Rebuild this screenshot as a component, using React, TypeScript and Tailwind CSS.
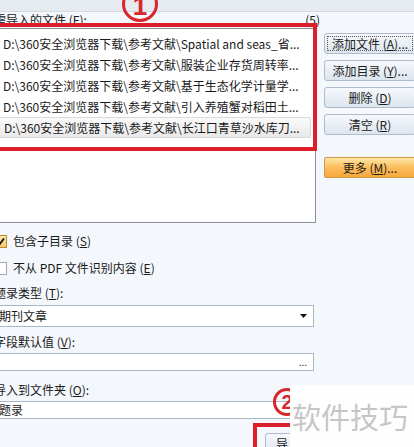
import React from "react";

const font = { fontFamily: '"Noto Sans CJK SC", "Noto Sans", sans-serif' };

function Btn({ children, focus }: { children: React.ReactNode; focus?: boolean }) {
  return (
    <div className="relative h-[21px] w-[92px] rounded-[3px] border border-[#aebccb] bg-gradient-to-b from-[#f6f9fc] to-[#dde5ee] flex items-center justify-center text-[12px] text-[#1a1a1a]">
      {focus && <div className="absolute inset-[2px] border border-dotted border-[#555]" />}
      <span className="relative">{children}</span>
    </div>
  );
}

const rows = [
  "D:\\360安全浏览器下载\\参考文献\\Spatial and seas_省...",
  "D:\\360安全浏览器下载\\参考文献\\服装企业存货周转率...",
  "D:\\360安全浏览器下载\\参考文献\\基于生态化学计量学...",
  "D:\\360安全浏览器下载\\参考文献\\引入养殖蟹对稻田土...",
  "D:\\360安全浏览器下载\\参考文献\\长江口青草沙水库刀...",
];

export default function App() {
  return (
    <div className="relative w-[414px] h-[447px] overflow-hidden bg-[#f4f7fb] text-[12px] text-[#1a1a1a] leading-none" style={font}>
      <div className="h-[12px] bg-[#e6ebf0] border-b border-[#d3dae2]" />
      <div className="flex">
        {/* left column */}
        <div className="ml-[-6px] w-[322px] flex flex-col">
          <div className="h-[16px] flex items-center justify-between">
            <span>需导入的文件 (<u>F</u>):</span>
            <span className="mr-[-4px]">(5)</span>
          </div>
          <div className="h-[195px] bg-white border border-[#8a9099] pt-[4px] pr-[4px]">
            {rows.map((r, i) => (
              <div
                key={i}
                className={
                  "h-[21px] flex items-center pl-[8px] whitespace-nowrap overflow-hidden " +
                  (i === 4 ? "rounded-[2px] border border-[#dadada] bg-gradient-to-b from-[#fafafa] to-[#e9e9e9]" : "")
                }
              >
                {r}
              </div>
            ))}
          </div>
          <div className="mt-[10px] h-[16px] flex items-center gap-[6px]">
            <div className="w-[13px] h-[13px] border border-[#b98d2e] bg-gradient-to-b from-[#fde7a8] to-[#f4c76a] flex items-center justify-center">
              <svg width="9" height="9" viewBox="0 0 9 9">
                <path d="M1 5 L3.5 7.5 L8 1.5" stroke="#111" strokeWidth="1.8" fill="none" />
              </svg>
            </div>
            <span>包含子目录 (<u>S</u>)</span>
          </div>
          <div className="mt-[11px] h-[16px] flex items-center gap-[6px]">
            <div className="w-[13px] h-[13px] border border-[#a0a7b0] bg-white" />
            <span>不从 PDF 文件识别内容 (<u>E</u>)</span>
          </div>
          <div className="mt-[9px] h-[16px] flex items-center">
            <span>题录类型 (<u>T</u>):</span>
          </div>
          <div className="mt-[4px] h-[22px] w-[320px] bg-white border border-[#a9b8c8] flex items-center justify-between pl-[4px] pr-[6px]">
            <span>期刊文章</span>
            <svg width="7" height="4" viewBox="0 0 7 4">
              <path d="M0 0 H7 L3.5 4 Z" fill="#111" />
            </svg>
          </div>
          <div className="mt-[7px] h-[16px] flex items-center">
            <span>字段默认值 (<u>V</u>):</span>
          </div>
          <div className="mt-[3px] h-[18px] w-[320px] bg-white border border-[#a9b8c8] flex items-end justify-end pr-[6px] pb-[3px]">
            <span className="text-[10px]">...</span>
          </div>
          <div className="mt-[11px] h-[16px] flex items-center">
            <span>导入到文件夹 (<u>O</u>):</span>
          </div>
          <div className="mt-[3px] h-[18px] w-[320px] bg-white border border-[#a9b8c8] flex items-center pl-[4px]">
            <span>题录</span>
          </div>
          <div className="mt-[14px] pl-[271px]">
            <div className="h-[22px] w-[80px] rounded-[3px] border border-[#aebccb] bg-gradient-to-b from-[#f6f9fc] to-[#dde5ee] flex items-center pl-[10px]">
              导入
            </div>
          </div>
        </div>
        {/* right column */}
        <div className="ml-[8px] pt-[21px] flex flex-col gap-[6px]">
          <Btn focus>添加文件 (<u>A</u>)...</Btn>
          <Btn>添加目录 (<u>Y</u>)...</Btn>
          <Btn>删除 (<u>D</u>)</Btn>
          <Btn>清空 (<u>R</u>)</Btn>
          <div className="mt-[16px] h-[21px] w-[92px] rounded-[2px] border border-[#c99a45] bg-gradient-to-b from-[#fde6a3] via-[#fbbd5d] to-[#f7a83a] flex items-center justify-center">
            更多 (<u>M</u>)...
          </div>
        </div>
      </div>

      {/* annotations */}
      <div className="absolute left-[-10px] top-[23px] w-[327px] h-[128px] border-[4px] border-[#dd1f2b]" />
      <div className="absolute left-[122px] top-[-14px] w-[36px] h-[36px] rounded-full border-[3px] border-[#d8262c] flex items-center justify-center">
        <span className="text-[#d8262c] text-[26px] font-bold leading-none mt-[4px]" style={{ fontFamily: '"Liberation Sans", sans-serif' }}>1</span>
      </div>
      <div className="absolute left-[273px] top-[388px] w-[28px] h-[28px] rounded-full border-[3px] border-[#d8262c] flex items-center justify-center">
        <span className="text-[#d8262c] text-[20px] font-bold leading-none" style={{ fontFamily: '"Liberation Sans", sans-serif' }}>2</span>
      </div>
      <div className="absolute left-[253px] top-[423px] w-[200px] h-[60px] border-[4px] border-[#dd1f2b]" />
      <div className="absolute left-[290px] top-[385px] w-[124px] h-[62px] bg-[#fefefe] flex items-center pl-[2px]">
        <span className="text-[29px] text-[#c6c6c6] leading-none tracking-[0px]" style={font}>软件技巧</span>
      </div>
    </div>
  );
}
